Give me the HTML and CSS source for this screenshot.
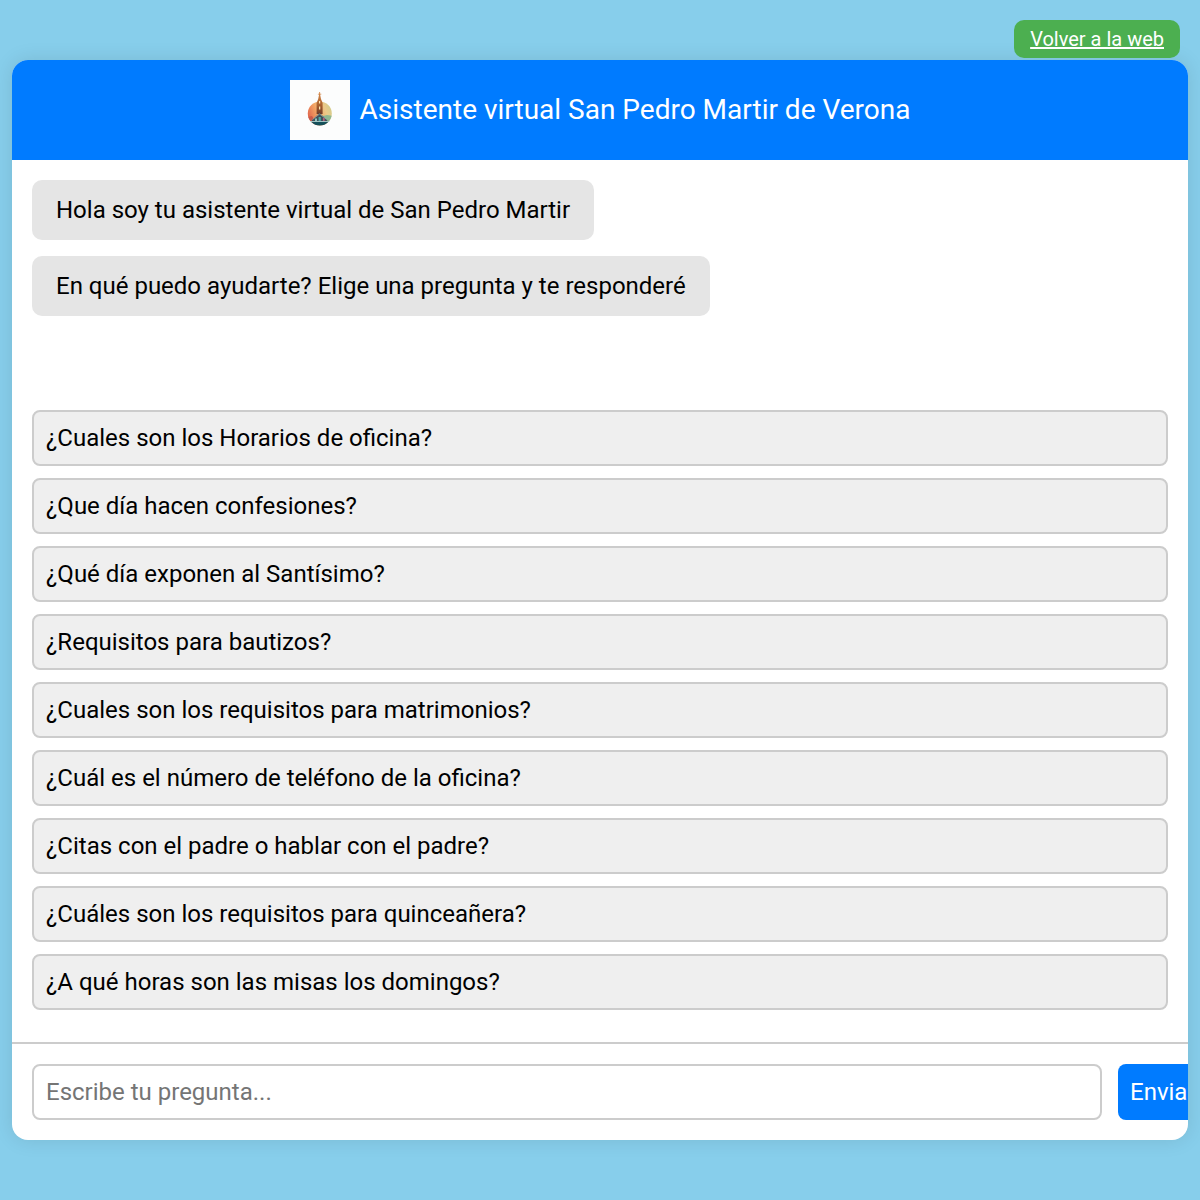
FILE: index.html
```html
<!DOCTYPE html>
<html lang="es">
<head>
    <meta charset="UTF-8">
    <meta name="viewport" content="width=device-width, initial-scale=1.0">
    <title>Asistente virtual San Pedro Martir de Verona</title>
    <link rel="stylesheet" href="styles.css">
</head>
<body>
    <a href="#" class="back-link">Volver a la web</a>

    <main class="chat-container">
        <header class="chat-header">
            <svg class="logo" viewBox="0 0 60 60" aria-hidden="true">
                <defs>
                    <linearGradient id="sky" x1="0" y1="0.6" x2="1" y2="0.2">
                        <stop offset="0" stop-color="#e0604a"/>
                        <stop offset="0.4" stop-color="#f3a765"/>
                        <stop offset="0.7" stop-color="#ecc98a"/>
                        <stop offset="1" stop-color="#c9cf8c"/>
                    </linearGradient>
                    <linearGradient id="tower" x1="0" y1="0" x2="0" y2="1">
                        <stop offset="0" stop-color="#d98a48"/>
                        <stop offset="0.6" stop-color="#a8602f"/>
                        <stop offset="1" stop-color="#6e3a28"/>
                    </linearGradient>
                    <clipPath id="disc"><circle cx="29.8" cy="33.6" r="12"/></clipPath>
                </defs>
                <rect width="60" height="60" fill="#fcfdfd"/>
                <g clip-path="url(#disc)">
                    <rect x="17" y="21" width="26" height="26" fill="url(#sky)"/>
                    <path d="M33 36l4-1 6 1v6H33z" fill="#8fb891"/>
                    <path d="M17 37l5-1 3 5h-8z" fill="#c95a4a"/>
                    <rect x="17" y="41" width="26" height="6" fill="#15505a"/>
                </g>
                <!-- torre y cruz -->
                <path d="M29.2 12h.9v1.800h1.200v.8h-1.200l.9 4.400 1.600 4V34h-6V23l1.600-4 .9-4.400h-1.200v-.8h1.300z" fill="url(#tower)"/>
                <path d="M29 21h1.200v2.400H29zM29 26.500h1.300v3H29z" fill="#ffe6b0"/>
                <!-- nave -->
                <path d="M22 40l7.600-7 7.600 7v1H22z" fill="#41505a"/>
                <path d="M22.500 39.500l7.100-5.500 7.100 5.500" fill="none" stroke="#a9c4c0" stroke-width="0.6"/>
                <path d="M25 38.500h2V41h-2z" fill="#8ec6c0"/>
                <path d="M33 38h1.600v3H33z" fill="#b8607c"/>
                <path d="M28.600 37h2.200v4h-2.200z" fill="#4aa8a6"/>
                <path d="M20 41.500h19.500" stroke="#c5e0dc" stroke-width="0.8"/>
            </svg>
            <span>Asistente virtual San Pedro Martir de Verona</span>
        </header>

        <section class="chat-messages">
            <div class="message">Hola soy tu asistente virtual de San Pedro Martir</div>
            <div class="message">En qué puedo ayudarte? Elige una pregunta y te responderé</div>
        </section>

        <section class="questions">
            <button type="button" class="question">¿Cuales son los Horarios de oficina?</button>
            <button type="button" class="question">¿Que día hacen confesiones?</button>
            <button type="button" class="question">¿Qué día exponen al Santísimo?</button>
            <button type="button" class="question">¿Requisitos para bautizos?</button>
            <button type="button" class="question">¿Cuales son los requisitos para matrimonios?</button>
            <button type="button" class="question">¿Cuál es el número de teléfono de la oficina?</button>
            <button type="button" class="question">¿Citas con el padre o hablar con el padre?</button>
            <button type="button" class="question">¿Cuáles son los requisitos para quinceañera?</button>
            <button type="button" class="question">¿A qué horas son las misas los domingos?</button>
        </section>

        <form class="chat-input">
            <input type="text" placeholder="Escribe tu pregunta..." aria-label="Escribe tu pregunta">
            <button type="submit">Enviar</button>
        </form>
    </main>
</body>
</html>
```
FILE: styles.css
```css
* {
    box-sizing: border-box;
}
body {
    font-family: Roboto, Arial, sans-serif;
    font-size: 24px;
    line-height: 28px;
    margin: 0;
    min-height: 100vh;
    display: flex;
    justify-content: center;
    align-items: center;
    background-color: #87ceeb;
}
input, button {
    font: inherit;
}
.back-link {
    position: absolute;
    top: 20px;
    right: 20px;
    padding: 8px 16px;
    font-size: 20px;
    line-height: 22px;
    color: white;
    background-color: #4caf50;
    border-radius: 10px;
}
.chat-container {
    display: flex;
    flex-direction: column;
    width: 98%;
    min-height: 90vh;
    background: white;
    border-radius: 16px;
    box-shadow: 0 0 20px rgba(0,0,0,0.1);
    overflow: hidden;
}
.chat-header {
    display: flex;
    justify-content: center;
    align-items: center;
    gap: 10px;
    padding: 20px;
    font-size: 28px;
    line-height: 32px;
    color: white;
    background-color: #007bff;
}
.logo {
    width: 60px;
    height: 60px;
}
.chat-messages {
    flex: 1;
    display: flex;
    flex-direction: column;
    align-items: flex-start;
    gap: 16px;
    padding: 20px;
}
.message {
    padding: 16px 24px;
    background-color: #e5e5e5;
    border-radius: 10px;
}
.questions {
    display: flex;
    flex-direction: column;
    gap: 12px;
    padding: 20px 20px 32px;
}
.question {
    padding: 12px;
    text-align: left;
    color: black;
    background-color: #efefef;
    border: 2px solid #ccc;
    border-radius: 8px;
    cursor: pointer;
}
.question:hover {
    background-color: #e0e0e0;
}
.chat-input {
    display: flex;
    gap: 16px;
    padding: 20px;
    border-top: 2px solid #ccc;
}
.chat-input input {
    flex: none;
    width: calc(100% - 66px);
    height: 56px;
    padding: 12px;
    border: 2px solid #ccc;
    border-radius: 8px;
}
.chat-input button {
    flex: none;
    padding: 12px;
    color: white;
    background-color: #007bff;
    border: none;
    border-radius: 8px;
    cursor: pointer;
}
.chat-input button:hover {
    background-color: #0056b3;
}
```
